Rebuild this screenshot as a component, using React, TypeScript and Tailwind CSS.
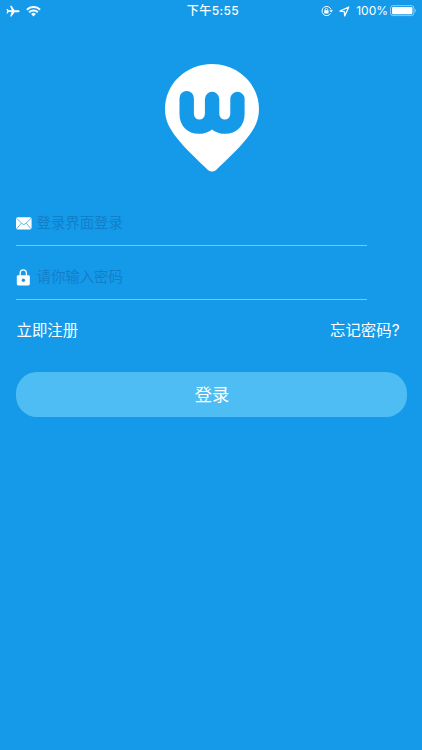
import type { ReactNode } from "react";

function PlaneIcon() {
  return (
    <svg className="h-[13px] w-[14px]" viewBox="0 0 14 13" fill="currentColor">
      <path d="M13.600 6.200c0-.7-.8-1-1.800-1H8.600L5.500.8H4.100l1.500 4.500H2.700L1.500 3.900H.5l.7 2.300-.7 2.300h1L2.700 7.100h2.900L4.100 11.600h1.400l3.100-4.400h3.200c1 0 1.800-.3 1.800-1z" />
    </svg>
  );
}

function WifiIcon() {
  return (
    <svg className="h-[11px] w-[15px]" viewBox="0 0 15 11" fill="none" stroke="currentColor" strokeWidth="2">
      <path d="M.9 3.700a9.400 9.400 0 0 1 13.200 0" />
      <path d="M3.200 6.200a6.100 6.100 0 0 1 8.600 0" />
      <path d="M7.500 10.400 5.100 8a3.400 3.400 0 0 1 4.800 0z" fill="currentColor" stroke="none" />
    </svg>
  );
}

function RotationLockIcon() {
  return (
    <svg className="h-[12px] w-[12px]" viewBox="0 0 12 12" fill="none" stroke="currentColor" strokeWidth="1">
      <path d="M9.600 8.400A4.600 4.600 0 1 1 10 4.500" />
      <path d="M8.300 5.200H12L10.200 7.600z" fill="currentColor" stroke="none" />
      <rect x="3.200" y="5.200" width="4.400" height="3.200" rx=".4" fill="currentColor" stroke="none" />
      <path d="M4.100 5.600v-.9a1.300 1.300 0 0 1 2.600 0v.9" strokeWidth=".8" />
    </svg>
  );
}

function LocationIcon() {
  return (
    <svg className="h-[11px] w-[11px]" viewBox="0 0 11 11" fill="none" stroke="currentColor" strokeWidth="1.300" strokeLinejoin="round">
      <path d="M9.800 1 1 5.200l4.300.4.400 4.300z" />
    </svg>
  );
}

function BatteryIcon() {
  return (
    <svg className="h-[12px] w-[27px]" viewBox="0 0 27 12">
      <rect x=".5" y=".6" width="23.400" height="10" rx="2.600" fill="none" stroke="#fff" strokeOpacity=".5" />
      <rect x="2" y="2" width="20.400" height="7.200" rx="1.200" fill="#fff" />
      <path d="M24.900 4c1.400.4 1.400 3 0 3.400z" fill="#fff" fillOpacity=".5" />
    </svg>
  );
}

function StatusBar() {
  return (
    <header className="grid h-[22px] grid-cols-3 items-center pl-[6px] pr-[5px] font-['Inter','Noto_Sans_CJK_SC',sans-serif]">
      <div className="flex items-center gap-[6px]">
        <PlaneIcon />
        <WifiIcon />
      </div>
      <div className="pl-[3px] text-center text-[12px] leading-none font-medium tracking-[0.4px]">下午5:55</div>
      <div className="flex items-center justify-end">
        <RotationLockIcon />
        <span className="ml-[6px] flex">
          <LocationIcon />
        </span>
        <span className="ml-[6px] text-[12px] leading-none">100%</span>
        <span className="ml-[2px] flex">
          <BatteryIcon />
        </span>
      </div>
    </header>
  );
}

function Logo() {
  return (
    <svg className="h-[108px] w-[94px]" viewBox="0 0 94 108">
      <path
        d="M47 0C21 0 0 20 0 45 0 56.500 4.500 64.500 11.500 73.500 20 84.500 31.500 95 43.200 106.200Q47 109 50.800 106.200C62.500 95 74 84.500 82.500 73.500 89.500 64.500 94 56.500 94 45 94 20 73 0 47 0z"
        fill="#fff"
      />
      <path
        d="M14.500 34.200a7.200 7.200 0 0 1 14.400 0V50a5.500 5.500 0 0 0 11 0V35a7.200 7.200 0 0 1 14.400 0V50a5.500 5.500 0 0 0 11 0V34.200a7.200 7.200 0 0 1 14.300 0V50C79.600 62.500 71 69.800 60.500 69.800 55 69.800 51 68.500 47 65.400 43 68.500 39 69.800 33.500 69.800 23 69.800 14.500 62.500 14.500 50z"
        fill="#159aea"
      />
    </svg>
  );
}

function MailIcon() {
  return (
    <svg className="h-[13px] w-[16px]" viewBox="0 0 16 13">
      <rect y=".3" width="15.600" height="12.200" rx="1.800" fill="#fff" />
      <path d="M.6 1.400 6.400 6.900q1.400 1.200 2.800 0L15 1.400M.8 11.600 5.300 6.200M14.800 11.600 10.300 6.200" fill="none" stroke="#159aea" strokeWidth=".7" />
    </svg>
  );
}

function LockIcon() {
  return (
    <svg className="h-[17px] w-[14px]" viewBox="0 0 14 17">
      <path d="M4.200 7V4a3.100 3.100 0 0 1 6.200 0v3" fill="none" stroke="#fff" strokeWidth="1.300" />
      <rect x=".8" y="6.200" width="13" height="10.300" rx="1.400" fill="#fff" />
      <circle cx="7.400" cy="11.200" r="1.700" fill="#159aea" />
    </svg>
  );
}

function Field({ icon, type, placeholder }: { icon: ReactNode; type: string; placeholder: string }) {
  return (
    <label className="flex h-[54px] w-[351px] items-center border-b border-[#7cc6f4] pt-[10px]">
      <span className="flex w-[20.5px]">{icon}</span>
      <input
        type={type}
        placeholder={placeholder}
        className="min-w-0 flex-1 bg-transparent text-[14.4px] outline-none placeholder:text-[#117fc8]"
      />
    </label>
  );
}

export default function App() {
  return (
    <div className="flex h-[750px] w-[422px] flex-col overflow-hidden bg-[#159aea] font-['Liberation_Sans','Noto_Sans_CJK_SC',sans-serif] text-white">
      <StatusBar />
      <main className="flex flex-col">
        <div className="mt-[42px] flex justify-center pl-px">
          <Logo />
        </div>
        <form className="mt-[20px] flex flex-col pl-4">
          <Field icon={<MailIcon />} type="text" placeholder="登录界面登录" />
          <Field icon={<LockIcon />} type="password" placeholder="请你输入密码" />
        </form>
        <div className="mt-[19px] flex justify-between pr-[22.5px] pl-[16.5px] text-[15.4px] leading-[24px]">
          <a href="#">立即注册</a>
          <a href="#" className="font-['Inter','Noto_Sans_CJK_SC',sans-serif]">忘记密码?</a>
        </div>
        <button className="mt-[29px] ml-[16px] h-[45px] w-[391px] rounded-[21px] bg-[#4dbdf3] pt-[2px] pl-px text-[17.3px]">
          登录
        </button>
      </main>
    </div>
  );
}
